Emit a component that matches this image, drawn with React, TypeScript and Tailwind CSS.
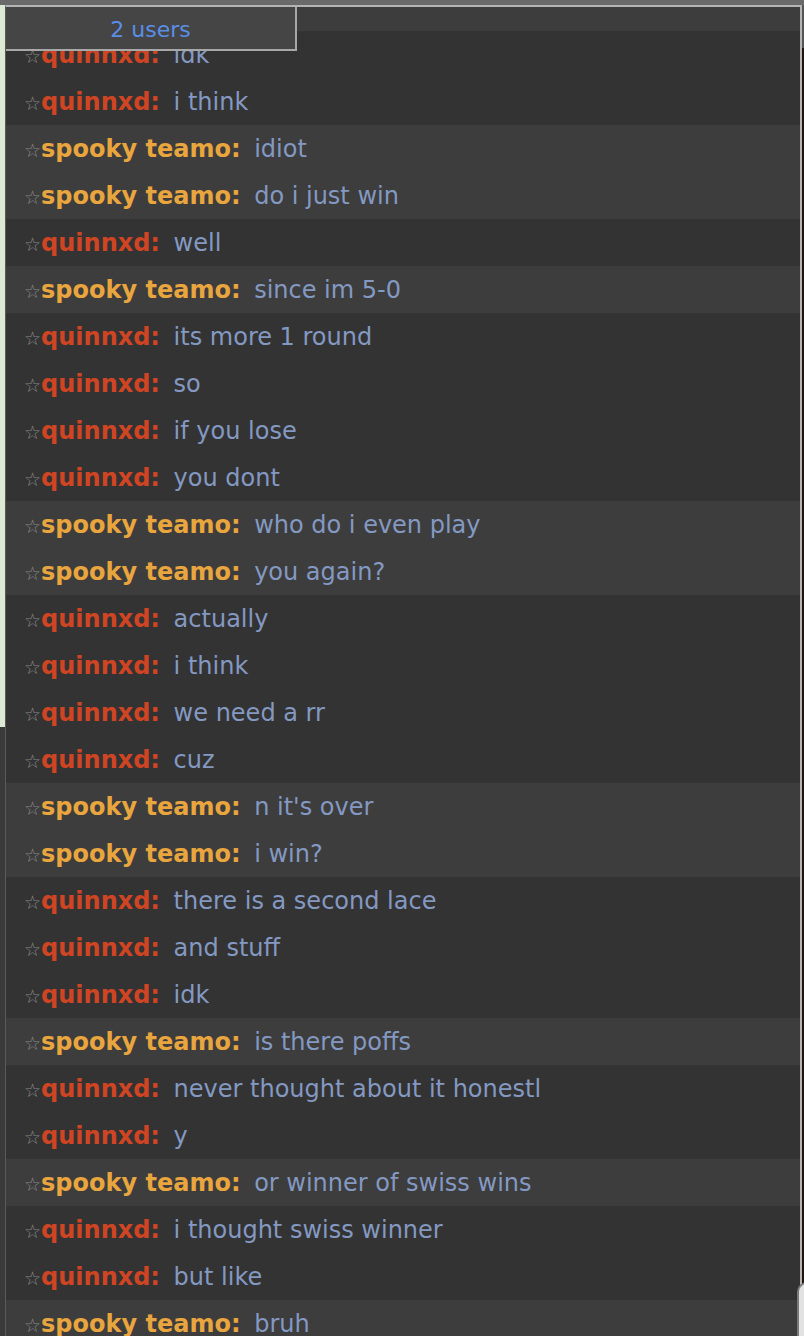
const rows: [string, string][] = [
  ["q", "idk"],
  ["q", "i think"],
  ["s", "idiot"],
  ["s", "do i just win"],
  ["q", "well"],
  ["s", "since im 5-0"],
  ["q", "its more 1 round"],
  ["q", "so"],
  ["q", "if you lose"],
  ["q", "you dont"],
  ["s", "who do i even play"],
  ["s", "you again?"],
  ["q", "actually"],
  ["q", "i think"],
  ["q", "we need a rr"],
  ["q", "cuz"],
  ["s", "n it's over"],
  ["s", "i win?"],
  ["q", "there is a second lace"],
  ["q", "and stuff"],
  ["q", "idk"],
  ["s", "is there poffs"],
  ["q", "never thought about it honestl"],
  ["q", "y"],
  ["s", "or winner of swiss wins"],
  ["q", "i thought swiss winner"],
  ["q", "but like"],
  ["s", "bruh"],
];

function Row({ who, text }: { who: string; text: string }) {
  const spooky = who === "s";
  return (
    <div
      className={
        spooky
          ? "flex h-[47px] shrink-0 items-center bg-[#3d3d3d] pl-[18px]"
          : "flex h-[47px] shrink-0 items-center bg-[#333333] pl-[18px]"
      }
    >
      <span className="whitespace-nowrap text-[24px] leading-none">
        <span className="text-[19px] text-[#8a8a8a]">☆</span>
        <span className={spooky ? "font-bold text-[#e9a53e]" : "font-bold text-[#cf4524]"}>
          {spooky ? "spooky teamo:" : "quinnxd:"}
        </span>{" "}
        <span className="ml-[6px] text-[#8499c2]">{text}</span>
      </span>
    </div>
  );
}

export default function App() {
  return (
    <div
      className="relative flex h-[1336px] w-[804px] flex-col overflow-hidden bg-[#6a6a6a]"
      style={{ fontFamily: '"DejaVu Sans", Verdana, sans-serif' }}
    >
      <div className="h-[5px] shrink-0" />
      <div className="flex min-h-0 flex-1">
        {/* page behind, left edge */}
        <div className="flex w-[5px] shrink-0 flex-col">
          <div className="h-[722px] bg-[#dde9d5]" />
          <div className="flex-1 bg-[#3a3a3a]" />
        </div>

        <div className="relative flex min-w-0 flex-1 flex-col overflow-hidden border-t-2 border-r-2 border-l border-t-[#b4b4b4] border-r-[#b4b4b4] border-l-[#5a5a5a]">
          <div className="h-[24px] shrink-0 bg-[#3d3d3d]" />
          {rows.map(([who, text], i) => (
            <Row key={i} who={who} text={text} />
          ))}

          {/* users tab */}
          <div className="absolute top-[-2px] left-0 flex h-[46px] w-[291px] items-center justify-center border-r-2 border-b-2 border-[#a8a8a8] bg-[#454545] pt-[4px]">
            <span className="text-[22px] text-[#5a8ee8]">2 users</span>
          </div>
        </div>

        <div className="flex w-[2px] shrink-0 flex-col">
          <div className="h-[43px] bg-[#555555]" />
          <div className="flex-1 bg-[#1e140c]" />
        </div>
      </div>

      <div className="absolute top-[1282px] left-[797px] h-[70px] w-[14px] rounded-tl-[10px] border-t-2 border-l-2 border-[#7a7a7a] bg-[#e2e2e2]" />
    </div>
  );
}
